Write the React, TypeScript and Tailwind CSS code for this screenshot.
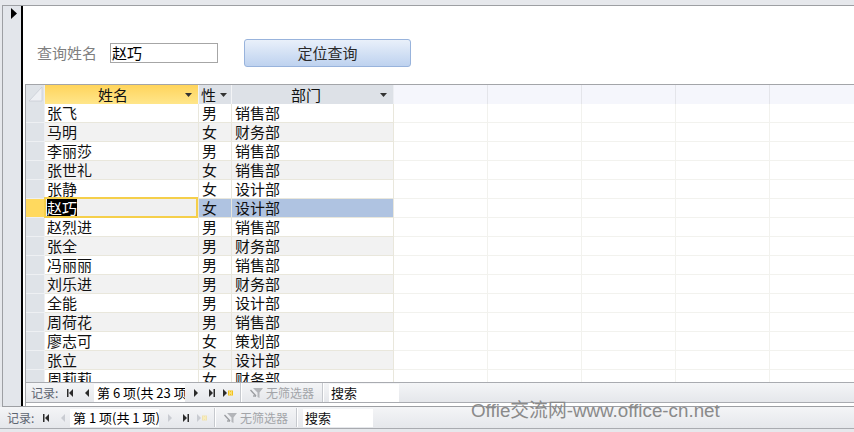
import React from "react";

type Row = { name: string; sex: string; dept: string };

const rows: Row[] = [
  { name: "张飞", sex: "男", dept: "销售部" },
  { name: "马明", sex: "女", dept: "财务部" },
  { name: "李丽莎", sex: "男", dept: "销售部" },
  { name: "张世礼", sex: "女", dept: "销售部" },
  { name: "张静", sex: "女", dept: "设计部" },
  { name: "赵巧", sex: "女", dept: "设计部" },
  { name: "赵烈进", sex: "男", dept: "销售部" },
  { name: "张全", sex: "男", dept: "财务部" },
  { name: "冯丽丽", sex: "男", dept: "销售部" },
  { name: "刘乐进", sex: "男", dept: "财务部" },
  { name: "全能", sex: "男", dept: "设计部" },
  { name: "周荷花", sex: "男", dept: "销售部" },
  { name: "廖志可", sex: "女", dept: "策划部" },
  { name: "张立", sex: "女", dept: "设计部" },
  { name: "周莉莉", sex: "女", dept: "财务部" },
];

const CURRENT = 5;

function DropArrow() {
  return (
    <svg width="7" height="4" viewBox="0 0 7 4" className="shrink-0">
      <polygon points="0,0 7,0 3.5,4" fill="#333" />
    </svg>
  );
}

// navigation button glyphs
function First({ off }: { off?: boolean }) {
  const c = off ? "#c9ccd2" : "#2b2b2b";
  return (
    <svg width="6" height="8" viewBox="0 0 6 8">
      <rect x="0" y="0" width="1.5" height="8" fill={c} />
      <polygon points="6,0 2,4 6,8" fill={c} />
    </svg>
  );
}
function Prev({ off }: { off?: boolean }) {
  return (
    <svg width="4" height="8" viewBox="0 0 4 8">
      <polygon points="4,0 0,4 4,8" fill={off ? "#c9ccd2" : "#2b2b2b"} />
    </svg>
  );
}
function Next({ off }: { off?: boolean }) {
  return (
    <svg width="4" height="8" viewBox="0 0 4 8">
      <polygon points="0,0 4,4 0,8" fill={off ? "#c9ccd2" : "#2b2b2b"} />
    </svg>
  );
}
function Last({ off }: { off?: boolean }) {
  const c = off ? "#c9ccd2" : "#2b2b2b";
  return (
    <svg width="6" height="8" viewBox="0 0 6 8">
      <polygon points="0,0 4,4 0,8" fill={c} />
      <rect x="4.5" y="0" width="1.5" height="8" fill={c} />
    </svg>
  );
}
function NewRec({ off }: { off?: boolean }) {
  const c = off ? "#c9ccd2" : "#2b2b2b";
  const y = off ? "#efe2b0" : "#f2c21a";
  return (
    <svg width="10" height="8" viewBox="0 0 10 8">
      <polygon points="0,0 4,4 0,8" fill={c} />
      <rect x="5" y="1.5" width="5" height="5" fill={y} />
      <rect x="6" y="2.5" width="1" height="1" fill="#fff5c8" />
      <rect x="8" y="2.5" width="1" height="1" fill="#fff5c8" />
      <rect x="7" y="3.5" width="1" height="1" fill="#fff5c8" />
      <rect x="6" y="4.5" width="1" height="1" fill="#fff5c8" />
      <rect x="8" y="4.5" width="1" height="1" fill="#fff5c8" />
    </svg>
  );
}
function Funnel() {
  return (
    <svg width="14" height="12" viewBox="0 0 14 12">
      <polygon points="3,1 13,1 9.5,5.5 9.5,11 7.5,10 7.5,5.5" fill="#b3b5b9" />
      <line x1="0.5" y1="3" x2="6" y2="9" stroke="#9a9ca0" strokeWidth="1.3" />
      <line x1="6" y1="9" x2="3" y2="9" stroke="#9a9ca0" strokeWidth="1.3" />
    </svg>
  );
}

function Sep() {
  return <div className="w-[2px] h-[19px] border-l border-[#c6c9ce] bg-white shrink-0" />;
}

function NavBar({ pos, firstOff, nextOff, newOff, boxW, className }: {
  pos: string; firstOff?: boolean; nextOff?: boolean; newOff?: boolean; boxW: string; className: string;
}) {
  return (
    <div className={`flex items-center bg-linear-to-b from-[#f4f5f7] to-[#e5e7eb] text-[12px] whitespace-nowrap ${className}`}>
      <span className="w-[29px] shrink-0 text-[#5d6470]">记录:</span>
      <span className="ml-[7px]"><First /></span>
      <span className="ml-[12px]"><Prev off={firstOff} /></span>
      <div className={`ml-[5px] h-[18px] bg-white overflow-hidden text-[13px] leading-[18px] pl-[3px] text-black shrink-0 ${boxW}`}>{pos}</div>
      <span className="ml-[9px]"><Next off={nextOff} /></span>
      <span className="ml-[11px]"><Last /></span>
      <span className="ml-[8px]"><NewRec off={newOff} /></span>
      <span className="ml-[7px]"><Sep /></span>
      <span className="ml-[8px] flex items-center"><Funnel /></span>
      <span className="ml-[2px] text-[#a3a5a9] text-[12px]">无筛选器</span>
      <span className="ml-[8px]"><Sep /></span>
      <div className="ml-[5px] w-[70px] h-[18px] bg-white text-[13px] leading-[18px] pl-[2px] text-[#111] shrink-0">搜索</div>
    </div>
  );
}

export default function App() {
  return (
    <div className="w-[854px] h-[432px] relative overflow-hidden bg-[#e6e8ec] flex flex-col font-['Noto_Sans_CJK_SC',sans-serif]">
      <div className="h-[5px] shrink-0" />

      {/* main form frame */}
      <div className="flex-1 ml-[2px] flex border-t border-l border-b border-[#9d9fa3] min-h-0">
        <div className="w-[18px] shrink-0 bg-[#e3e6eb] pt-[2px] pl-[8px]">
          <svg width="6" height="11" viewBox="0 0 6 11">
            <polygon points="0,0 6,5.5 0,11" fill="#000" />
          </svg>
        </div>
        <div className="w-[2px] shrink-0 bg-black" />

        <div className="flex-1 bg-white flex flex-col min-w-0">
          {/* query row */}
          <div className="h-[78px] shrink-0 pt-[33px] pl-[14px]">
            <div className="flex items-center h-[28px]">
              <span className="text-[15px] text-[#7f7f7f] w-[60px] shrink-0">查询姓名</span>
              <div className="ml-[13px] w-[108px] h-[20px] border border-[#a6a6a6] text-[15px] leading-[18px] pl-[1px] text-black">赵巧</div>
              <button className="ml-[26px] w-[167px] h-[28px] rounded-[3px] border border-[#98b3dc] bg-linear-to-b from-[#e9f0fa] to-[#bed2ef] text-[15px] text-[#2a2a2a]">
                定位查询
              </button>
            </div>
          </div>

          {/* subform datasheet */}
          <div className="flex-1 ml-[2px] flex flex-col border-t border-l border-[#a3a5a9] min-h-0">
            <div className="flex-1 overflow-hidden bg-white text-[15px] text-[#111] min-h-0">
              {/* header */}
              <div className="flex h-[19px]">
                <div className="w-[19px] shrink-0 bg-[#dfe3e8] border-r border-[#eceef2]">
                  <svg width="18" height="19" viewBox="0 0 18 19">
                    <polygon points="16,2 16,16 3,16" fill="#eef0f4" stroke="#c9cdd5" strokeWidth="0.8" />
                  </svg>
                </div>
                <div className="w-[154px] shrink-0 flex items-center bg-linear-to-b from-[#ffd45a] to-[#ffe68a] border-r border-[#f3f4f6] leading-[19px]">
                  <span className="flex-1 text-center">姓名</span>
                  <span className="w-[17px] flex justify-start pl-[4px]"><DropArrow /></span>
                </div>
                <div className="w-[33px] shrink-0 flex items-center bg-[#dde1e7] border-r border-[#f3f4f6] leading-[19px] pl-[2px]">
                  <span>性</span>
                  <span className="ml-[4px]"><DropArrow /></span>
                </div>
                <div className="w-[162px] shrink-0 flex items-center bg-[#dde1e7] border-r border-[#eceef2] leading-[19px]">
                  <span className="flex-1 text-center pl-[4px]">部门</span>
                  <span className="w-[17px] flex justify-start pl-[4px]"><DropArrow /></span>
                </div>
                <div className="w-[94px] shrink-0 bg-[#f5f6fc] border-r border-[#e4e5ea]" />
                <div className="w-[94px] shrink-0 bg-[#f5f6fc] border-r border-[#e4e5ea]" />
                <div className="w-[94px] shrink-0 bg-[#f5f6fc] border-r border-[#e4e5ea]" />
                <div className="w-[94px] shrink-0 bg-[#f5f6fc] border-r border-[#e4e5ea]" />
                <div className="flex-1 bg-[#f5f6fc]" />
              </div>

              {rows.map((r, i) => {
                const cur = i === CURRENT;
                const alt = i % 2 === 1;
                return (
                  <div key={i} className="flex h-[19px] leading-[18px]">
                    <div className={`w-[19px] shrink-0 border-r border-b border-[#eef0f3] ${cur ? "bg-[#ffd95e]" : "bg-[#dfe3e8]"}`} />
                    <div className={`w-[154px] shrink-0 relative border-r border-b border-[#e9e7dc] pl-[2px] ${cur ? "bg-[#f0f0f0]" : alt ? "bg-[#f2f2f2]" : "bg-white"}`}>
                      {cur ? <span className="bg-black text-white">{r.name}</span> : r.name}
                      {cur && <div className="absolute -top-[2px] -left-[1px] right-0 -bottom-[1px] border-2 border-[#f5cf4a]" />}
                    </div>
                    <div className={`w-[33px] shrink-0 border-r border-b border-[#e9e7dc] pl-[3px] ${cur ? "bg-[#afc3e1]" : alt ? "bg-[#f2f2f2]" : "bg-white"}`}>{r.sex}</div>
                    <div className={`w-[162px] shrink-0 border-r border-b border-[#e9e7dc] pl-[3px] ${cur ? "bg-[#afc3e1]" : alt ? "bg-[#f2f2f2]" : "bg-white"}`}>{r.dept}</div>
                    <div className="w-[94px] shrink-0 border-r border-b border-[#f2f2ee]" />
                    <div className="w-[94px] shrink-0 border-r border-b border-[#f2f2ee]" />
                    <div className="w-[94px] shrink-0 border-r border-b border-[#f2f2ee]" />
                    <div className="w-[94px] shrink-0 border-r border-b border-[#f2f2ee]" />
                    <div className="flex-1 border-b border-[#f2f2ee]" />
                  </div>
                );
              })}
            </div>

            <NavBar
              pos="第 6 项(共 23 项)"
              boxW="w-[91px]"
              className="h-[21px] shrink-0 border-t border-b border-[#a9abb0] pl-[5px]"
            />
            <div className="h-[3px] shrink-0 bg-white" />
          </div>
        </div>
      </div>

      {/* main form navigation */}
      <NavBar
        pos="第 1 项(共 1 项)"
        firstOff
        nextOff
        newOff
        boxW="w-[89px]"
        className="h-[21px] shrink-0 pl-[7px]"
      />
      <div className="h-[4px] shrink-0 border-t border-[#a9abb0] bg-[#e6e8ec]" />

      <div className="absolute left-[471px] top-[399px] text-[18.8px] leading-[23px] text-[#8a8a8a] font-['Liberation_Sans','Noto_Sans_CJK_SC',sans-serif] whitespace-nowrap">
        Offie交流网-www.office-cn.net
      </div>
    </div>
  );
}
